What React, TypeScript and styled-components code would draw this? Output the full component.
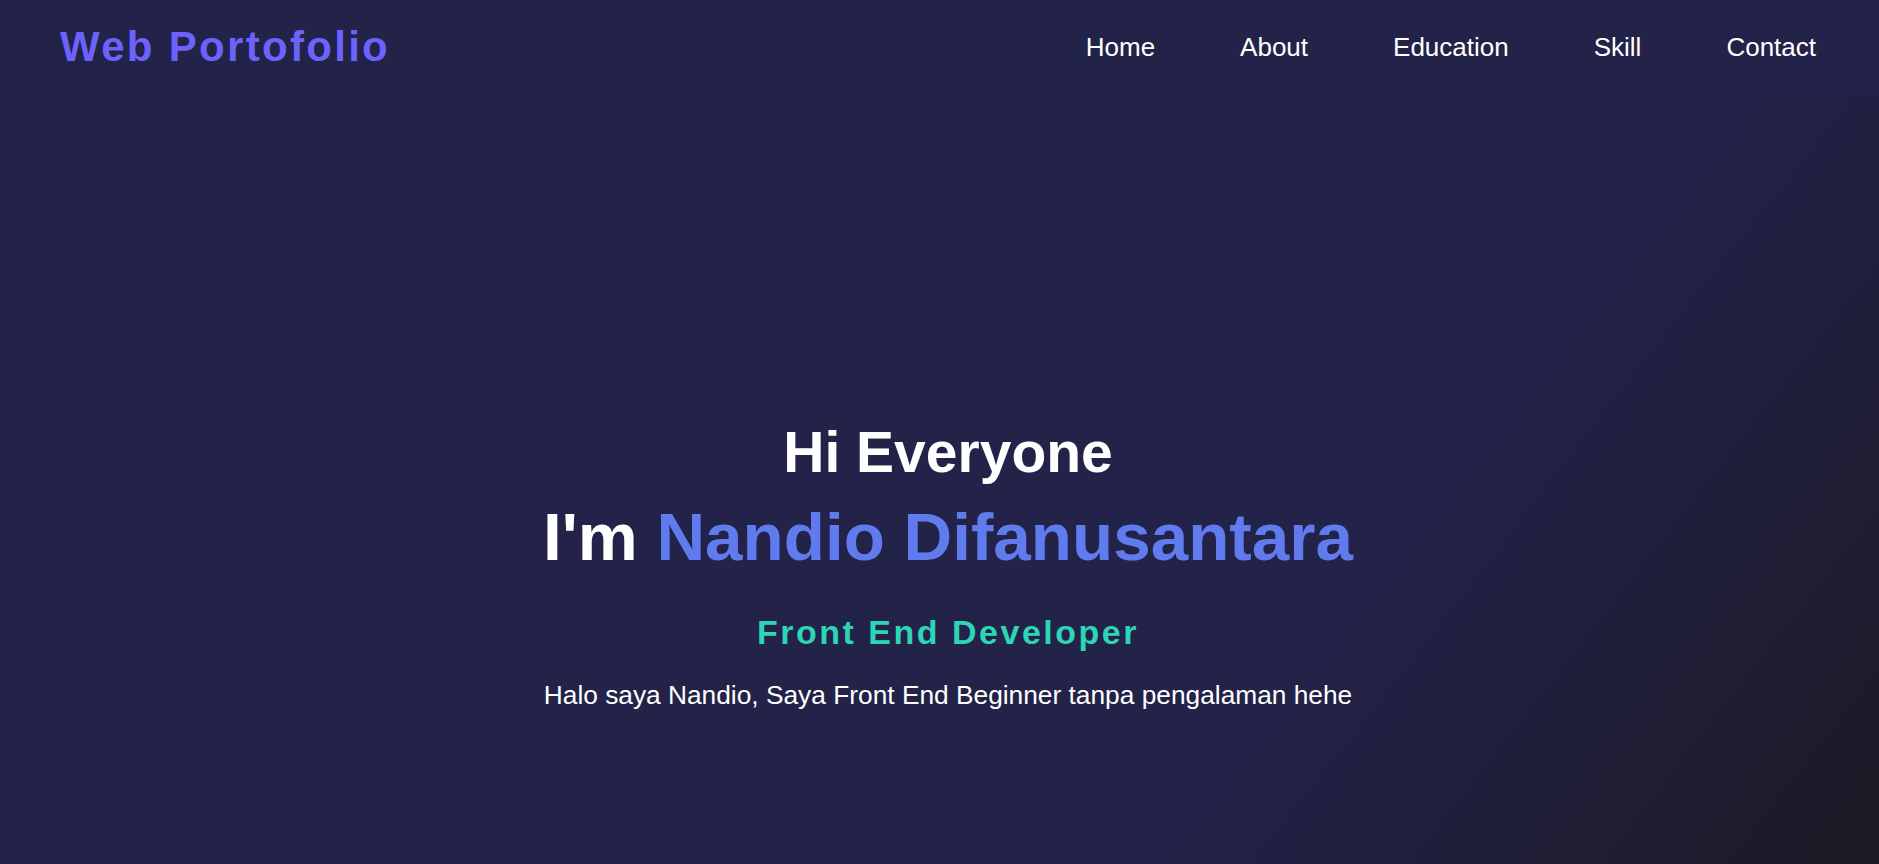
import React from "react";
import styled, { createGlobalStyle } from "styled-components";

const GlobalStyle = createGlobalStyle`
  * { box-sizing: border-box; }
  html, body { margin: 0; padding: 0; }
  body {
    background: #232249;
    font-family: "Liberation Sans", Arial, sans-serif;
    color: #ffffff;
    overflow: hidden;
  }
`;

const Page = styled.div`
  display: flex;
  flex-direction: column;
  width: 100%;
  height: 864px;
`;

const Navbar = styled.nav`
  display: flex;
  align-items: center;
  justify-content: space-between;
  height: 94px;
  padding: 0 63px 0 60px;
  background: #232249;
  flex-shrink: 0;
`;

const Logo = styled.div`
  font-size: 42px;
  font-weight: 700;
  letter-spacing: 2.3px;
  color: #6b63fb;
  white-space: nowrap;
`;

const NavList = styled.ul`
  display: flex;
  align-items: center;
  gap: 85px;
  list-style: none;
  margin: 0;
  padding: 0;
`;

const NavLink = styled.a`
  font-size: 26px;
  color: #ffffff;
  text-decoration: none;
  white-space: nowrap;
`;

const Hero = styled.section`
  flex: 1;
  display: flex;
  flex-direction: column;
  align-items: center;
  padding: 324px 0 0 17px;
  background: linear-gradient(128deg, #232249 0%, #232249 70%, #1b1a24 100%);
  text-align: center;
`;

const Greeting = styled.h1`
  margin: 0;
  font-size: 57px;
  line-height: 1.2;
  font-weight: 700;
  color: #ffffff;
`;

const Name = styled.h2`
  margin: 11px 0 0;
  font-size: 67.4px;
  line-height: 1.2;
  font-weight: 700;
  color: #ffffff;
`;

const Highlight = styled.span`
  color: #5f7bee;
`;

const Role = styled.h3`
  margin: 34px 0 0;
  font-size: 34px;
  line-height: 1.2;
  font-weight: 700;
  letter-spacing: 2.5px;
  color: #2dd5b4;
`;

const Intro = styled.p`
  margin: 27px 0 0;
  font-size: 26.3px;
  line-height: 1.2;
  color: #ffffff;
`;

const links = ["Home", "About", "Education", "Skill", "Contact"];

export default function App() {
  return (
    <>
      <GlobalStyle />
      <Page>
        <Navbar>
          <Logo>Web Portofolio</Logo>
          <NavList>
            {links.map((l) => (
              <li key={l}>
                <NavLink href={`#${l.toLowerCase()}`}>{l}</NavLink>
              </li>
            ))}
          </NavList>
        </Navbar>
        <Hero>
          <Greeting>Hi Everyone</Greeting>
          <Name>
            I'm <Highlight>Nandio Difanusantara</Highlight>
          </Name>
          <Role>Front End Developer</Role>
          <Intro>Halo saya Nandio, Saya Front End Beginner tanpa pengalaman hehe</Intro>
        </Hero>
      </Page>
    </>
  );
}
